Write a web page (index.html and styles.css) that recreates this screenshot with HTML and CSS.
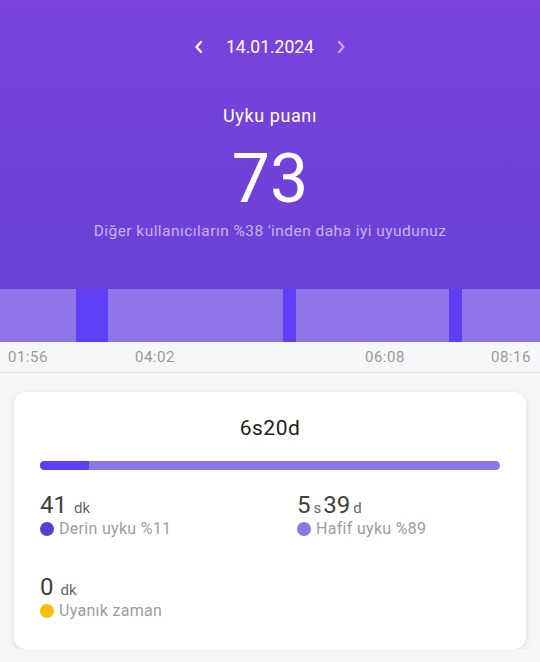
FILE: index.html
```html
<!DOCTYPE html>
<html lang="tr">
<head>
<meta charset="utf-8">
<link rel="stylesheet" href="styles.css">
</head>
<body>
<div class="header">
  <div class="nav">
    <svg class="chev" width="12" height="16" viewBox="0 0 12 16"><path d="M8 3 L3.5 8 L8 13" fill="none" stroke="#fff" stroke-width="2.2" stroke-linecap="round" stroke-linejoin="round"/></svg>
    <span class="date">14.01.2024</span>
    <svg class="chev faded" width="12" height="16" viewBox="0 0 12 16"><path d="M4 3 L8.5 8 L4 13" fill="none" stroke="#fff" stroke-width="2.2" stroke-linecap="round" stroke-linejoin="round"/></svg>
  </div>
  <div class="title">Uyku puanı</div>
  <div class="score">73</div>
  <div class="sub">Diğer kullanıcıların %38 'inden daha iyi uyudunuz</div>
</div>
<div class="chart">
  <div class="seg light" style="width:76px"></div>
  <div class="seg deep" style="width:32px"></div>
  <div class="seg light" style="width:175px"></div>
  <div class="seg deep" style="width:13px"></div>
  <div class="seg light" style="width:153px"></div>
  <div class="seg deep" style="width:13px"></div>
  <div class="seg light" style="flex:1"></div>
</div>
<div class="axis">
  <span class="tick" style="left:8px">01:56</span>
  <span class="tick" style="left:135px">04:02</span>
  <span class="tick" style="left:365px">06:08</span>
  <span class="tick" style="left:491px">08:16</span>
</div>
<div class="card">
  <div class="total">6s20d</div>
  <div class="bar"><div class="bar-deep" style="width:49px"></div></div>
  <div class="stats">
    <div class="stat">
      <div class="val"><span class="num">41</span><span class="unit sp">dk</span></div>
      <div class="lab"><span class="dot d-deep"></span>Derin uyku %11</div>
    </div>
    <div class="stat">
      <div class="val"><span class="num">5</span><span class="unit">s</span><span class="num">39</span><span class="unit">d</span></div>
      <div class="lab"><span class="dot d-light"></span>Hafif uyku %89</div>
    </div>
    <div class="stat">
      <div class="val"><span class="num">0</span><span class="unit sp">dk</span></div>
      <div class="lab"><span class="dot d-awake"></span>Uyanık zaman</div>
    </div>
  </div>
</div>
</body>
</html>
```
FILE: styles.css
```css
* { box-sizing: border-box; }
body {
  margin: 0;
  background: #f7f7f7;
  font-family: Roboto, "Noto Sans", sans-serif;
  width: 540px;
}
.header {
  height: 289px;
  background: linear-gradient(180deg, #7a44dd 0%, #6b40d5 100%);
  display: flex;
  flex-direction: column;
  align-items: center;
  color: #fff;
}
.nav {
  margin-top: 36px;
  height: 22px;
  display: flex;
  align-items: center;
  gap: 21px;
}
.chev { display: block; }
.chev.faded { opacity: 0.55; }
.date {
  font-size: 17.5px;
  line-height: 22px;
}
.title {
  margin-top: 47px;
  font-size: 18px;
  letter-spacing: 0.6px;
  line-height: 22px;
}
.score {
  margin-top: 17px;
  font-size: 68px;
  line-height: 70px;
  font-weight: 400;
}
.sub {
  margin-top: 7px;
  font-size: 15.5px;
  letter-spacing: 0.45px;
  line-height: 20px;
  color: #c6b3f3;
}
.chart {
  height: 53px;
  display: flex;
}
.seg { height: 100%; }
.light { background: #8f74e8; }
.deep { background: #5e3ff5; }
.axis {
  position: relative;
  height: 31px;
  background: #f6f7f8;
  border-bottom: 1px solid #e3e3e3;
}
.tick {
  position: absolute;
  top: 6px;
  font-size: 15px;
  letter-spacing: 0.5px;
  line-height: 18px;
  color: #9a9a9a;
}
.card {
  margin: 19px 14px 0;
  height: 257px;
  background: #fff;
  border-radius: 12px;
  box-shadow: 0 2px 6px rgba(0,0,0,0.12);
  padding: 23px 26px 0;
}
.total {
  text-align: center;
  font-size: 21px;
  letter-spacing: 0.5px;
  line-height: 26px;
  color: #1e1e1e;
}
.bar {
  margin-top: 20px;
  height: 9px;
  border-radius: 5px;
  background: #8f74e8;
  overflow: hidden;
}
.bar-deep {
  height: 100%;
  background: #5e3ff5;
}
.stats {
  margin-top: 21px;
  display: grid;
  grid-template-columns: 257px 1fr;
  row-gap: 34px;
}
.val {
  display: flex;
  align-items: baseline;
  color: #404040;
  height: 28px;
}
.num {
  font-size: 24px;
  line-height: 28px;
}
.unit {
  font-size: 15px;
  color: #666;
  margin: 0 2px 0 3px;
}
.unit.sp { margin-left: 7px; }
.lab {
  display: flex;
  align-items: center;
  font-size: 16px;
  letter-spacing: 0.3px;
  line-height: 20px;
  color: #9d9d9d;
}
.dot {
  width: 14px;
  height: 14px;
  border-radius: 50%;
  margin-right: 5px;
}
.d-deep { background: #5a3ed0; }
.d-light { background: #9473e6; }
.d-awake { background: #f8bf0f; }
```
